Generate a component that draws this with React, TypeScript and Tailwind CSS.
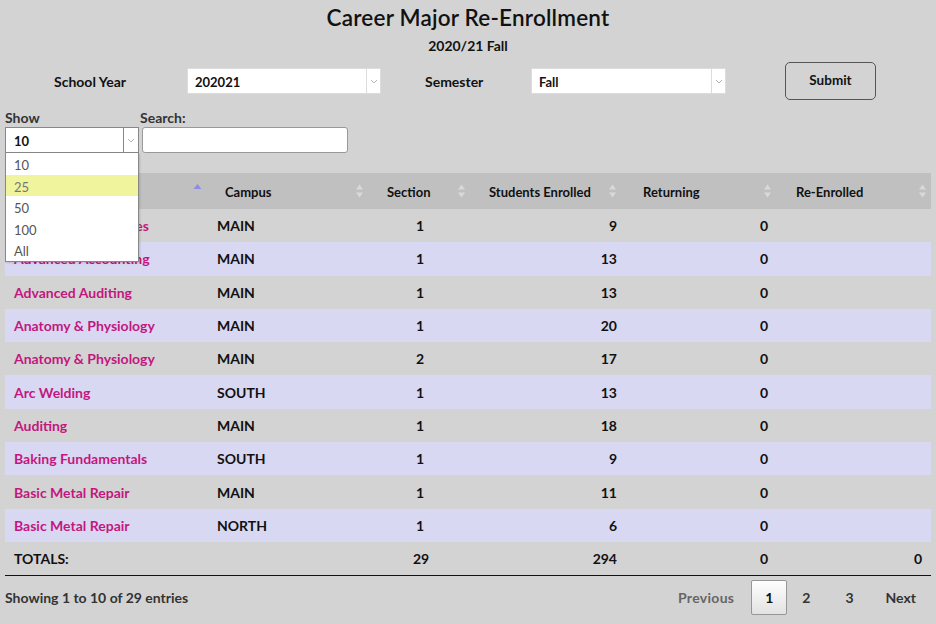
import React from "react";

type Row = {
  major: string;
  campus: string;
  section: number;
  enrolled: number;
  returning: number;
};

const rows: Row[] = [
  { major: "Accounting Principles", campus: "MAIN", section: 1, enrolled: 9, returning: 0 },
  { major: "Advanced Accounting", campus: "MAIN", section: 1, enrolled: 13, returning: 0 },
  { major: "Advanced Auditing", campus: "MAIN", section: 1, enrolled: 13, returning: 0 },
  { major: "Anatomy & Physiology", campus: "MAIN", section: 1, enrolled: 20, returning: 0 },
  { major: "Anatomy & Physiology", campus: "MAIN", section: 2, enrolled: 17, returning: 0 },
  { major: "Arc Welding", campus: "SOUTH", section: 1, enrolled: 13, returning: 0 },
  { major: "Auditing", campus: "MAIN", section: 1, enrolled: 18, returning: 0 },
  { major: "Baking Fundamentals", campus: "SOUTH", section: 1, enrolled: 9, returning: 0 },
  { major: "Basic Metal Repair", campus: "MAIN", section: 1, enrolled: 11, returning: 0 },
  { major: "Basic Metal Repair", campus: "NORTH", section: 1, enrolled: 6, returning: 0 },
];

const cols = "grid grid-cols-[205px_158px_102px_151px_155px_155px]";

// header label offsets, per column
const headPad = ["pl-[20px]", "pl-[15px]", "pl-[19px]", "pl-[19px]", "pl-[22px]", "pl-[20px]"];

function Chevron() {
  return (
    <svg width="8" height="5" viewBox="0 0 8 5" fill="none">
      <path d="M1 1l3 3 3-3" stroke="#b5b5b5" strokeWidth="1" />
    </svg>
  );
}

function SortIcon({ active }: { active?: boolean }) {
  if (active) {
    return (
      <svg width="9" height="12" viewBox="0 0 9 12" className="absolute right-[8px] top-[10px]">
        <path d="M4.5 1L8.5 6H0.5Z" fill="#8d8de3" />
      </svg>
    );
  }
  return (
    <svg width="9" height="14" viewBox="0 0 9 14" className="absolute right-[4px] top-[11px]">
      <path d="M4.5 0.5L8 5.5H1Z" fill="#d9d9d9" />
      <path d="M4.5 13.5L8 8.5H1Z" fill="#d9d9d9" />
    </svg>
  );
}

function Select({ value, width }: { value: string; width: string }) {
  return (
    <div className={`${width} h-[26px] bg-white border border-[#dcdcdc] flex items-stretch`}>
      <div className="flex-1 flex items-center pl-[7px] pt-[4px] text-[13px] font-bold text-[#111]">{value}</div>
      <div className="w-[14px] border-l border-[#dcdcdc] flex items-center justify-center">
        <Chevron />
      </div>
    </div>
  );
}

export default function App() {
  return (
    <div className="w-[936px] h-[624px] bg-[#d3d3d3] overflow-hidden px-[5px] text-[#111] font-['Lato','Noto_Sans',sans-serif]">
      <h1 className="mt-[4px] text-center text-[22.5px] leading-[28px] font-semibold tracking-[0.2px]">
        Career Major Re-Enrollment
      </h1>
      <div className="mt-[5px] text-center text-[14px] leading-[18px] font-bold">2020/21 Fall</div>

      <div className="mt-[7px] flex items-center h-[38px] pl-[49px]">
        <div className="w-[133px] text-[14px] font-bold pt-[1px]">School Year</div>
        <Select value="202021" width="w-[194px]" />
        <div className="ml-[44px] w-[106px] text-[14px] font-bold pt-[1px]">Semester</div>
        <Select value="Fall" width="w-[195px]" />
        <button className="ml-[59px] w-[91px] h-[38px] rounded-[5px] border border-[#555] text-[13.5px] font-bold pb-[1px]">
          Submit
        </button>
      </div>

      <div className="mt-[10px] flex items-start relative">
        <div className="w-[135px]">
          <div className="text-[14px] leading-[16px] font-bold text-[#333]">Show</div>
          <div className="mt-[1px] w-[134px] h-[26px] bg-white border border-[#888] flex items-stretch">
            <div className="flex-1 flex items-center pl-[8px] pt-[4px] text-[13px] font-bold">10</div>
            <div className="w-[15px] border-l border-[#888] flex items-center justify-center">
              <Chevron />
            </div>
          </div>
          <div className="absolute left-0 top-[43px] z-10 w-[134px] bg-white border border-[#888] border-t-0 text-[13px] text-[#555] shadow-[1px_1px_2px_rgba(0,0,0,0.15)]">
            {["10", "25", "50", "100", "All"].map((o) => (
              <div
                key={o}
                className={`h-[21.6px] flex items-center pl-[8px] pt-[4px] ${o === "25" ? "bg-[#eff49d] text-[#777]" : ""}`}
              >
                {o}
              </div>
            ))}
          </div>
        </div>
        <div>
          <div className="text-[14px] leading-[16px] font-bold text-[#333]">Search:</div>
          <div className="mt-[1px] ml-[2px] w-[206px] h-[26px] bg-white border border-[#999] rounded-[3px]" />
        </div>
      </div>

      <div className="mt-[20px] w-[926px]">
        <div className={`${cols} h-[36px] bg-[#c0c0c0] text-[13px] font-bold`}>
          {["Career Major", "Campus", "Section", "Students Enrolled", "Returning", "Re-Enrolled"].map((h, i) => (
            <div key={h} className={`relative flex items-center pt-[3px] ${headPad[i]}`}>
              <span>{h}</span>
              <SortIcon active={i === 0} />
            </div>
          ))}
        </div>

        {rows.map((r, i) => (
          <div
            key={i}
            className={`${cols} h-[33.3px] text-[14px] font-bold items-center ${i % 2 === 1 ? "bg-[#d9d8f3]" : "bg-[#d3d3d3]"}`}
          >
            <div className="pl-[9px] text-[#c3177f] whitespace-nowrap">{r.major}</div>
            <div className="pl-[7px]">{r.campus}</div>
            <div className="text-center pl-[2px]">{r.section}</div>
            <div className="text-right pr-[4px]">{r.enrolled}</div>
            <div className="text-right pr-[8px]">{r.returning}</div>
            <div />
          </div>
        ))}

        <div className={`${cols} h-[34px] text-[14px] font-bold items-center border-b border-[#111] pt-[1px]`}>
          <div className="pl-[9px]">TOTALS:</div>
          <div />
          <div className="text-center pl-[4px]">29</div>
          <div className="text-right pr-[4px]">294</div>
          <div className="text-right pr-[8px]">0</div>
          <div className="text-right pr-[9px]">0</div>
        </div>

        <div className="flex items-center justify-between h-[44px]">
          <div className="text-[14px] font-bold text-[#333]">Showing 1 to 10 of 29 entries</div>
          <div className="flex items-center text-[14px] font-bold text-[#333] pr-[15px]">
            <span className="text-[#666] mr-[17px] tracking-[0.3px]">Previous</span>
            <span className="w-[36px] h-[35px] flex items-center justify-center border border-[#979797] rounded-[2px] bg-gradient-to-b from-white to-[#e2e2e2] text-[#111] mr-[15px]">
              1
            </span>
            <span className="mr-[35px]">2</span>
            <span className="mr-[32px]">3</span>
            <span>Next</span>
          </div>
        </div>
      </div>
    </div>
  );
}
